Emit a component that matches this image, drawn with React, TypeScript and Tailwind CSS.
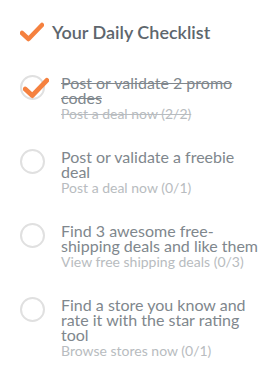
import React from "react";

const items = [
  { title: "Post or validate 2 promo codes", sub: "Post a deal now (2/2)", done: true },
  { title: "Post or validate a freebie deal", sub: "Post a deal now (0/1)", done: false },
  { title: "Find 3 awesome free-shipping deals and like them", sub: "View free shipping deals (0/3)", done: false },
  { title: "Find a store you know and rate it with the star rating tool", sub: "Browse stores now (0/1)", done: false },
];

function Check({ className }: { className?: string }) {
  return (
    <svg viewBox="0 0 24 20" className={className}>
      <path d="M2 11 L8.5 17 L22 3" fill="none" stroke="#f5813f" strokeWidth="4.5" strokeLinecap="round" strokeLinejoin="round" />
    </svg>
  );
}

export default function App() {
  return (
    <div className="w-[275px] h-[379px] bg-white pl-[20px] pt-[22px]" style={{ fontFamily: "Lato, 'Open Sans', sans-serif" }}>
      <div className="flex items-center">
        <Check className="w-[24px] h-[20px]" />
        <h1 className="ml-[8px] text-[18px] leading-[20px] font-semibold text-[#5e666d]">Your Daily Checklist</h1>
      </div>
      <div className="mt-[33px] flex flex-col gap-[28px]">
        {items.map((it, i) => (
          <div key={i} className="flex items-start">
            <div className="relative w-[25px] h-[25px] shrink-0 rounded-full border-2 border-[#e0e0e0]">
              {it.done && <Check className="absolute left-[1px] top-[0px] w-[26px] h-[22px]" />}
            </div>
            <div className="ml-[16px] w-[200px]">
              <div className={"text-[16px] leading-[15px] text-[#80878d]" + (it.done ? " line-through" : "")}>{it.title}</div>
              <div className={"text-[14px] leading-[15px] mt-[1px] text-[#b8bcc0]" + (it.done ? " line-through" : "")}>{it.sub}</div>
            </div>
          </div>
        ))}
      </div>
    </div>
  );
}
